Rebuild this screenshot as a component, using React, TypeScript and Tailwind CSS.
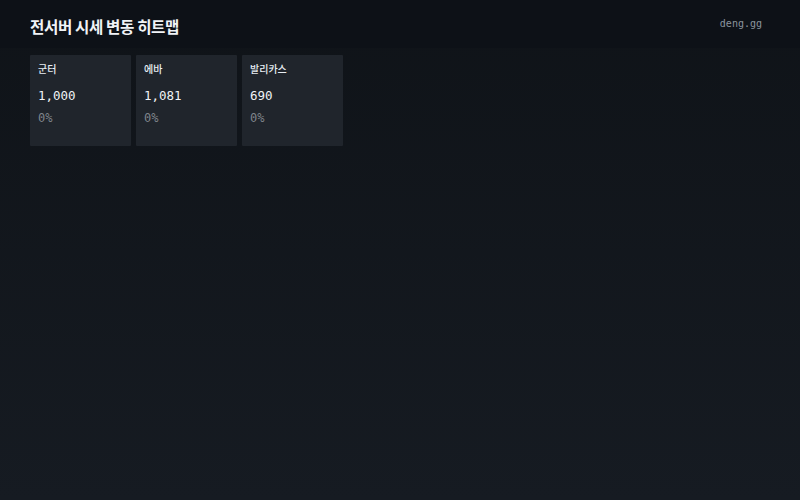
const servers = [
  { name: "군터", price: "1,000", change: "0%" },
  { name: "에바", price: "1,081", change: "0%" },
  { name: "발리카스", price: "690", change: "0%" },
];

const sans = "font-['Noto_Sans_CJK_KR','Noto_Sans',sans-serif]";
const mono = "font-['DejaVu_Sans_Mono','Noto_Sans_CJK_KR',monospace]";

export default function App() {
  return (
    <div className={`min-h-[500px] w-full bg-gradient-to-b from-[#0f1318] to-[#161b22] text-[#e6edf3] ${sans}`}>
      <header className="h-[48px] flex items-center justify-between pl-[30px] pr-[38px] pt-[6px] bg-[#0d1117]">
        <h1 className="text-[15.6px] font-bold tracking-tight text-[#f0f3f6]">전서버 시세 변동 히트맵</h1>
        <span className={`-mt-[8px] text-[10px] text-[#8b949e] ${mono}`}>deng.gg</span>
      </header>

      <main className="px-[30px] pt-[7px]">
        <div className="flex gap-[5px]">
          {servers.map((s) => (
            <div key={s.name} className="w-[101px] h-[91px] bg-[#20252c] rounded-[1px] px-[8px] pt-[7px] flex flex-col">
              <div className="text-[10px] leading-[14px] font-medium text-[#e6edf3]">{s.name}</div>
              <div className={`mt-[12px] text-[12.5px] leading-[16px] text-[#f0f3f6] ${mono}`}>{s.price}</div>
              <div className={`mt-[6px] text-[12px] leading-[16px] text-[#7f848b] ${mono}`}>{s.change}</div>
            </div>
          ))}
        </div>
      </main>
    </div>
  );
}
